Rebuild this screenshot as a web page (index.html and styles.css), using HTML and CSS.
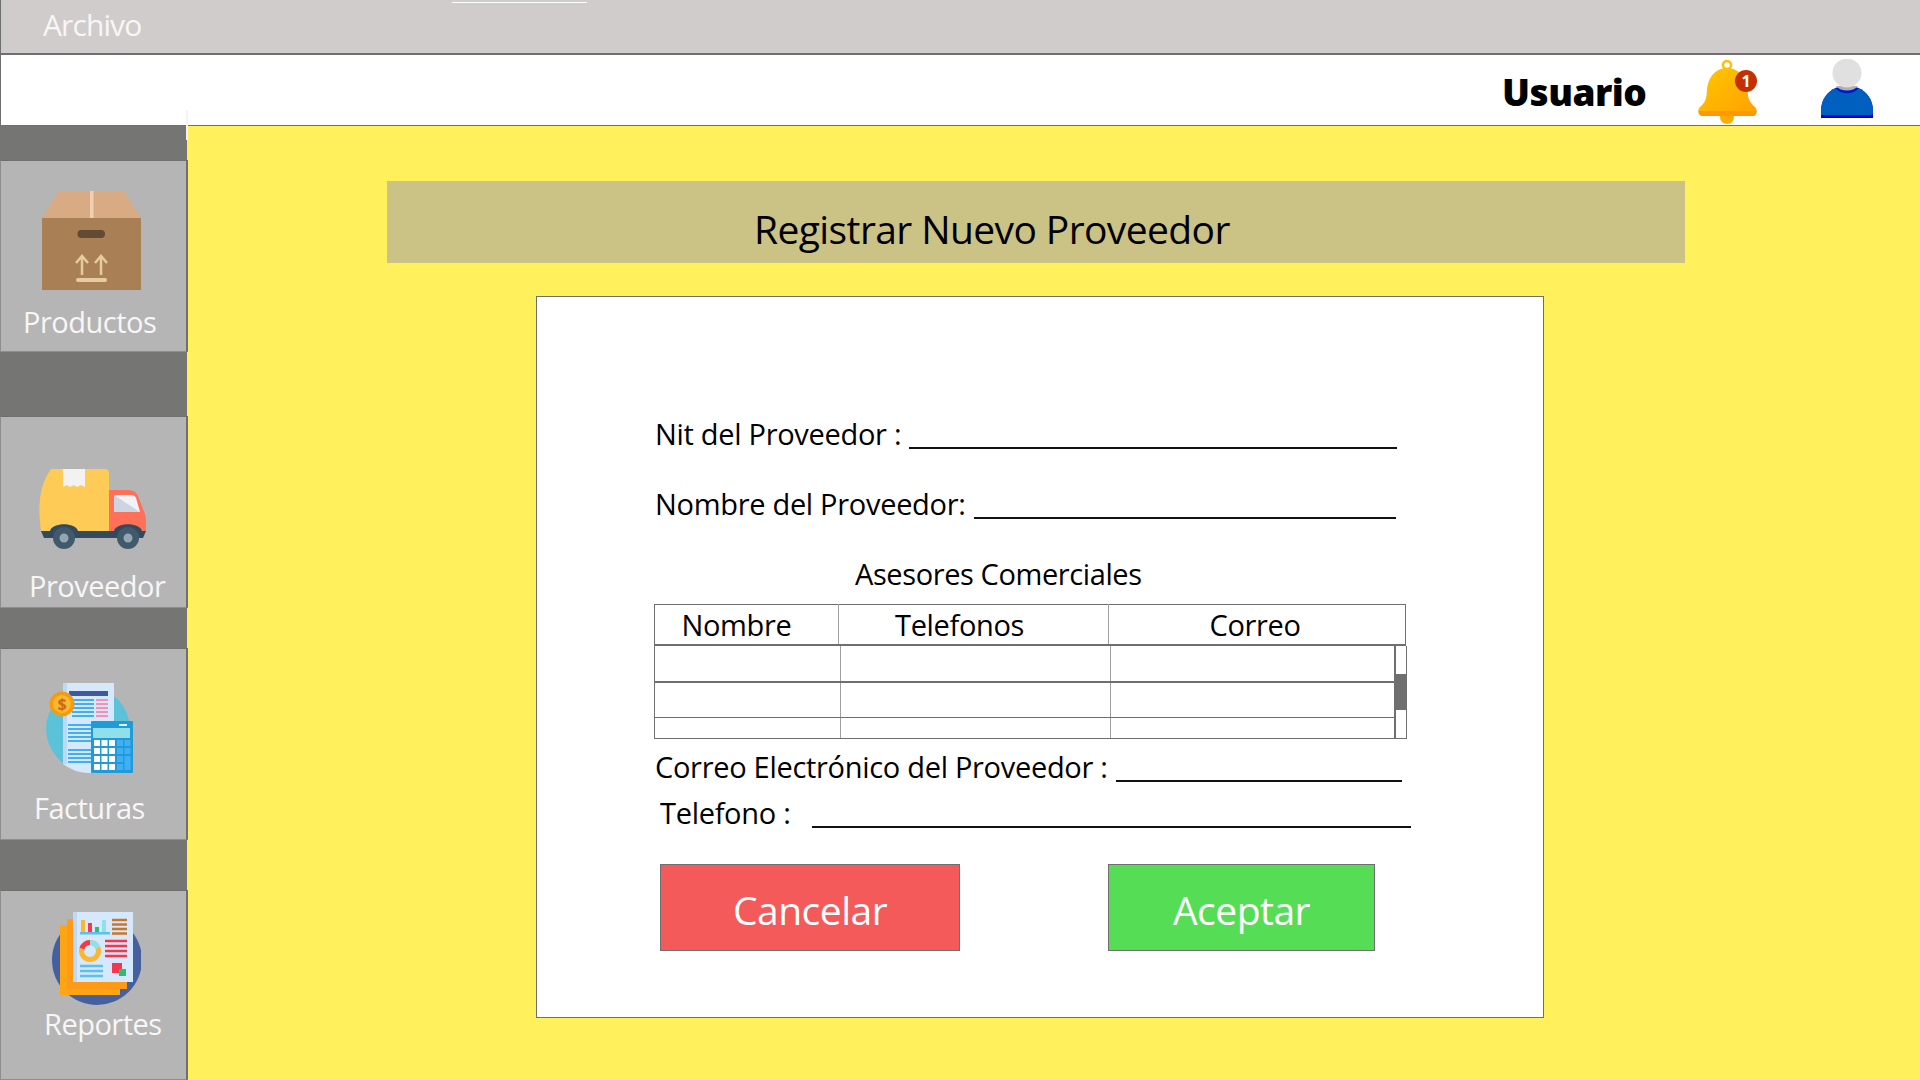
FILE: index.html
```html
<!DOCTYPE html>
<html lang="es">
<head>
  <meta charset="UTF-8" />
  <title>Registrar Nuevo Proveedor</title>
  <link rel="stylesheet" href="styles.css">
</head>
<body>

<div class="menubar"><span class="menu-item">Archivo</span></div>

<div class="topbar">
  <span class="user-name">Usuario</span>
  <svg class="bell" viewBox="0 0 59 64" width="59" height="64">
    <defs>
      <linearGradient id="bellFill" x1="0" y1="0" x2="1" y2="1">
        <stop offset="0" stop-color="#ffc800" />
        <stop offset="1" stop-color="#ffa000" />
      </linearGradient>
    </defs>
    <circle cx="29" cy="5" r="4" fill="#fff" stroke="#ffc000" stroke-width="2.5" />
    <circle cx="29" cy="57" r="7" fill="#ffab00" />
    <path d="M29 8C17 8 10 18 9 30C8.500 38 8 42 2 47C-1 50 0 56 5 56H54C59 56 60 50 57 47C51 42 50 38 49.500 30C49 18 41 8 29 8Z" fill="url(#bellFill)" />
    <path d="M0.500 51H58.500C58 54 57 56 54 56H5C2 56 1 54 0.500 51Z" fill="#ff9800" />
    <circle cx="48" cy="21" r="11" fill="#c43000" />
    <text x="48" y="27" class="badge-text">1</text>
  </svg>
  <svg class="user-icon" viewBox="0 0 52 59" width="52" height="59">
    <path d="M0 59V52C0 40 7 32 15 29H37C45 32 52 40 52 52V59Z" fill="#0000e6" />
    <path d="M0 56V52C0 40 7 32 15 29H37C45 32 52 40 52 52V53C52 55 51 56 49 56Z" fill="#0060c0" />
    <path d="M14 29C20 36 32 36 38 29L34 28H18Z" fill="#0018c8" />
    <path d="M15 27C20 33 32 33 37 27Z" fill="#b0b0b0" />
    <circle cx="26" cy="14" r="14.500" fill="#e0e0e0" />
  </svg>
</div>

<div class="layout">
  <nav class="sidebar">
    <a class="nav-item nav-productos">
      <svg class="nav-icon" viewBox="0 0 99 99" width="99" height="99">
        <path d="M17 0H82L99 27H0Z" fill="#d9ab85" />
        <rect y="27" width="99" height="72" fill="#a98056" />
        <rect x="48" width="3.500" height="27" fill="#f0d0b0" />
        <rect x="35.500" y="39" width="27.500" height="8" rx="4" fill="#634a32" />
        <path d="M34 72L40 65L46 72M40 65V84M53 72L59 65L65 72M59 65V84" fill="none" stroke="#e5cb9f" stroke-width="2.500" />
        <rect x="34" y="87" width="31" height="4" rx="2" fill="#e5cb9f" />
      </svg>
      <span class="nav-label">Productos</span>
    </a>
    <a class="nav-item nav-proveedor">
      <svg class="nav-icon" viewBox="0 0 108 80" width="108" height="80">
        <path d="M12 0H66C68.500 0 70 1.500 70 4V62H2C-1 40 -1 18 12 0Z" fill="#ffcb57" />
        <path d="M24 0H46V18L42 16L38 18L35 16L31 18L28 16L24 18Z" fill="#f2f2f2" />
        <path d="M70 21H90C94 21 97 23 99 27L106 45C107 48 107 52 107 62H70Z" fill="#ff7058" />
        <path d="M75 30C75 27 76 26 78 26H92C95 26 96 27 97 29L101 43H75Z" fill="#f0f3f7" />
        <path d="M75 26L101 43H75Z" fill="#cdd6e0" />
        <path d="M2 62H107L104 69H5Z" fill="#334a5e" />
        <path d="M11 62C13 53 37 53 39 62ZM75 62C77 53 101 53 103 62Z" fill="#334a5e" />
        <circle cx="25" cy="69" r="11" fill="#40596b" />
        <circle cx="25" cy="69" r="4.500" fill="#94a5b3" />
        <circle cx="89" cy="69" r="11" fill="#40596b" />
        <circle cx="89" cy="69" r="4.500" fill="#94a5b3" />
      </svg>
      <span class="nav-label">Proveedor</span>
    </a>
    <a class="nav-item nav-facturas">
      <svg class="nav-icon" viewBox="0 0 87 90" width="87" height="90">
        <circle cx="42" cy="46" r="42" fill="#5cc2d9" />
        <path d="M17 0H68V90H42C33 90 24 86 17 81Z" fill="#d6e8fb" />
        <rect x="17" width="4" height="81" fill="#bcd9f5" />
        <rect x="23" y="8" width="39" height="5" fill="#3f5a9c" />
        <path d="M26 17H48M26 21H48M26 25H48M26 29H48M26 33H48M22 42H46M22 46H46M22 50H46M22 54H46M22 58H46M22 67H46M22 71H46M22 75H46M22 79H46" stroke="#3fb0f5" stroke-width="2" />
        <path d="M50 17H62M50 21H62M50 25H62M50 29H62M50 33H62" stroke="#f78fb3" stroke-width="2" />
        <circle cx="16" cy="21" r="12.500" fill="#f39c12" />
        <circle cx="16" cy="21" r="9" fill="#fdb62f" />
        <text x="16" y="27" class="coin-text">$</text>
        <rect x="45" y="38" width="42" height="52" rx="1" fill="#229ad8" />
        <rect x="47" y="45" width="37" height="10" fill="#8fe0ea" />
        <rect x="73" y="41" width="8" height="2" fill="#e8f4fb" />
        <g fill="#fff">
          <rect x="48" y="57" width="6" height="6" /><rect x="55.500" y="57" width="6" height="6" /><rect x="63" y="57" width="6" height="6" />
          <rect x="48" y="65" width="6" height="6" /><rect x="55.500" y="65" width="6" height="6" /><rect x="63" y="65" width="6" height="6" />
          <rect x="48" y="73" width="6" height="6" /><rect x="55.500" y="73" width="6" height="6" /><rect x="63" y="73" width="6" height="6" />
          <rect x="48" y="81" width="6" height="6" /><rect x="55.500" y="81" width="6" height="6" /><rect x="63" y="81" width="6" height="6" />
        </g>
        <g fill="#3fb0f5">
          <rect x="71" y="57" width="6" height="6" /><rect x="78.500" y="57" width="6" height="6" />
          <rect x="71" y="65" width="6" height="6" /><rect x="78.500" y="65" width="6" height="6" />
          <rect x="71" y="73" width="6" height="6" /><rect x="78.500" y="73" width="6" height="14" />
          <rect x="71" y="81" width="6" height="6" />
        </g>
      </svg>
      <span class="nav-label">Facturas</span>
    </a>
    <a class="nav-item nav-reportes">
      <svg class="nav-icon" viewBox="0 0 89 93" width="89" height="93">
        <circle cx="45" cy="48" r="45" fill="#44609f" />
        <rect x="8" y="13" width="60" height="70" fill="#ffa412" />
        <rect x="15" y="7" width="60" height="70" fill="#ff9a17" />
        <rect x="21" width="60" height="70" fill="#d6e8fb" />
        <rect x="21" width="4" height="70" fill="#bcd9f5" />
        <rect x="28" y="20" width="30" height="2.500" fill="#5cc0ee" />
        <rect x="29" y="8" width="4" height="12" fill="#fdb62f" />
        <rect x="36" y="11" width="4" height="9" fill="#f5364c" />
        <rect x="43" y="15" width="4" height="5" fill="#2fbb70" />
        <rect x="50" y="8" width="4" height="12" fill="#8fe0ea" />
        <path d="M60 8H75M60 12.500H75M60 17H75M60 21.500H75" stroke="#c9752c" stroke-width="2.500" />
        <circle cx="38" cy="39" r="8.500" fill="none" stroke="#fdb62f" stroke-width="5" />
        <path d="M29.900 36.500A8.500 8.500 0 0 1 38 30.500" fill="none" stroke="#f5364c" stroke-width="5" />
        <path d="M38 30.500A8.500 8.500 0 0 1 46 36" fill="none" stroke="#8fe0ea" stroke-width="5" />
        <path d="M53 29H75M53 34H75M53 39H75M53 44H75" stroke="#f5364c" stroke-width="2.500" />
        <path d="M28 54H51M28 59H51M28 64H51" stroke="#5cc0ee" stroke-width="2.500" />
        <rect x="60" y="51" width="10" height="10" fill="#f5364c" />
        <rect x="67" y="57" width="7" height="7" fill="#2fbb70" />
      </svg>
      <span class="nav-label">Reportes</span>
    </a>
  </nav>

  <main class="content">
    <h1 class="banner">Registrar Nuevo Proveedor</h1>

    <section class="card">
      <div class="field field-nit">
        <span>Nit del Proveedor :</span><span class="blank"></span>
      </div>
      <div class="field field-nombre">
        <span>Nombre del Proveedor:</span><span class="blank"></span>
      </div>

      <h2 class="table-title">Asesores Comerciales</h2>
      <div class="advisors">
        <table class="advisors-head">
          <tr><th class="col-name">Nombre</th><th class="col-phone">Telefonos</th><th class="col-mail">Correo</th></tr>
        </table>
        <div class="advisors-body">
          <table class="advisors-rows">
            <tr class="row"><td class="col-name"></td><td class="col-phone"></td><td class="col-mail"></td></tr>
            <tr class="row"><td class="col-name"></td><td class="col-phone"></td><td class="col-mail"></td></tr>
            <tr class="row-cut"><td class="col-name"></td><td class="col-phone"></td><td class="col-mail"></td></tr>
          </table>
          <div class="scrollbar"><div class="scroll-thumb"></div></div>
        </div>
      </div>

      <div class="field field-correo">
        <span>Correo Electrónico del Proveedor :</span><span class="blank"></span>
      </div>
      <div class="field field-telefono">
        <span>Telefono :</span><span class="blank"></span>
      </div>

      <div class="actions">
        <button class="btn btn-cancel">Cancelar</button>
        <button class="btn btn-accept">Aceptar</button>
      </div>
    </section>
  </main>
</div>

</body>
</html>
```

FILE: styles.css
```css
* { box-sizing: border-box; }

html, body {
  margin: 0;
  height: 1080px;
  overflow: hidden;
}
body {
  font-family: "Open Sans", "Noto Sans", sans-serif;
  background: #fff05c;
  color: #000;
  position: relative;
}

/* barra de arriba */
.menubar {
  height: 55px;
  background: #d0cccb;
  border-left: 1px solid #706f6f;
  border-bottom: 2px solid #706f6f;
  padding-left: 42px;
  position: relative;
}
.menubar::after {
  content: "";
  position: absolute;
  left: 451px;
  top: 2px;
  width: 135px;
  height: 1px;
  background: #fff;
}
.menu-item {
  color: #f8f6f6;
  font-size: 30px;
  font-weight: 500;
  line-height: 50px;
  letter-spacing: -0.9px;
}
.topbar {
  height: 71px;
  background: #fff;
  border-left: 1px solid #706f6f;
  border-bottom: 1px solid #706f6f;
  display: flex;
  align-items: flex-start;
  padding-left: 1501px;
}
.user-name {
  font-size: 37px;
  font-weight: 800;
  width: 196px;
  line-height: 50px;
  margin-top: 12px;
  letter-spacing: -0.5px;
}
.bell { margin-top: 5px; }
.user-icon { margin: 4px 0 0 64px; }
.badge-text {
  fill: #fff;
  font-size: 16px;
  font-weight: 700;
  text-anchor: middle;
}
.coin-text {
  fill: #c96a16;
  font-size: 16px;
  font-weight: 700;
  text-anchor: middle;
}

.layout {
  display: flex;
  height: 954px;
}

/* menu lateral */
.sidebar {
  width: 187px;
  height: 954px;
  background: #757573;
  padding-top: 34px;
  flex-shrink: 0;
  position: relative;
}
.sidebar::before {
  content: "";
  position: absolute;
  left: 186px;
  top: -16px;
  width: 2px;
  height: 30px;
  background: #f4f2f4;
}
.nav-item {
  display: block;
  width: 188px;
  height: 192px;
  background: #b5b5b5;
  border-left: 1px solid #8d8d8d;
  border-top: 1px solid #706f6f;
  border-right: 2px solid #706f6f;
  border-bottom: 1px solid #8d8d8d;
  position: relative;
  color: #f8f6f6;
}
.nav-icon { display: block; }
.nav-label {
  display: block;
  font-size: 29px;
  font-weight: 500;
  line-height: 36px;
  letter-spacing: -0.5px;
}
.nav-productos { padding: 30px 0 0 41px; }
.nav-productos .nav-label { margin: 14px 0 0 -19px; }
.nav-proveedor { margin-top: 64px; padding: 52px 0 0 38px; }
.nav-proveedor .nav-label { margin: 19px 0 0 -10px; }
.nav-facturas { margin-top: 40px; padding: 34px 0 0 45px; }
.nav-facturas .nav-label { margin: 17px 0 0 -12px; }
.nav-reportes { margin-top: 50px; height: 190px; padding: 21px 0 0 51px; }
.nav-reportes .nav-label { margin: 1px 0 0 -8px; }

/* contenido */
.content {
  flex: 1;
  padding: 55px 0 0 200px;
}
.banner {
  margin: 0;
  width: 1298px;
  height: 82px;
  background: #cbc286;
  font-size: 39px;
  font-weight: 400;
  line-height: 50px;
  padding: 23px 0 0 367px;
  letter-spacing: -0.6px;
}
.card {
  margin: 33px 0 0 149px;
  width: 1008px;
  height: 722px;
  background: #fff;
  border: 1px solid #706f6f;
  padding: 120px 0 0 118px;
}
.field {
  display: flex;
  font-size: 29px;
  line-height: 34px;
  height: 36px;
  letter-spacing: -0.3px;
}
.blank {
  flex: 1;
  margin-left: 8px;
  border-bottom: 2px solid #111;
  height: 32px;
}
.field-nit { width: 742px; }
.field-nombre { width: 741px; margin-top: 34px; }
.field-correo { width: 747px; margin-top: 11px; }
.field-telefono { width: 751px; margin: 10px 0 0 5px; }
.field-telefono .blank { margin-left: 22px; }

.table-title {
  margin: 34px 0 0 200px;
  font-size: 29px;
  font-weight: 400;
  line-height: 34px;
  height: 36px;
  letter-spacing: -0.4px;
}

/* tabla de asesores */
.advisors {
  width: 753px;
  margin: 11px 0 0 -1px;
}
.advisors table {
  border-collapse: collapse;
  table-layout: fixed;
}
.advisors-head {
  width: 752px;
  border: 1px solid #706f6f;
  border-bottom: 2px solid #706f6f;
}
.advisors-head th {
  height: 40px;
  font-size: 29px;
  font-weight: 400;
  letter-spacing: -0.35px;
  padding: 0;
  border-right: 1px solid #a0a0a0;
}
.advisors-head th.col-name { width: 184px; padding-right: 20px; }
.advisors-head th.col-phone { width: 270px; padding-right: 28px; }
.advisors-head th.col-mail { border-right: 0; padding-right: 4px; }

.advisors-body {
  display: flex;
  height: 93px;
  border-bottom: 1px solid #706f6f;
  border-left: 1px solid #706f6f;
  overflow: hidden;
}
.advisors-rows { width: 739px; }
.advisors-rows td {
  padding: 0;
  border-right: 1px solid #a0a0a0;
}
.advisors-rows td.col-name { width: 185px; }
.advisors-rows td.col-phone { width: 270px; }
.advisors-rows td.col-mail { border-right: 0; }
.row td { height: 36px; border-bottom: 2px solid #706f6f; }
.row + .row td { height: 35px; border-bottom: 1px solid #706f6f; }
.row-cut td { height: 22px; }
.scrollbar {
  width: 13px;
  height: 93px;
  border-left: 2px solid #706f6f;
  border-right: 1px solid #706f6f;
  padding-top: 28px;
}
.scroll-thumb {
  height: 36px;
  background: #706f6f;
}

/* botones */
.actions {
  display: flex;
  margin: 32px 0 0 5px;
}
.btn {
  height: 87px;
  border: 1px solid #706f6f;
  color: #fff;
  font-family: inherit;
  font-size: 39px;
  font-weight: 500;
  letter-spacing: -0.5px;
  padding: 4px 0 0;
}
.btn-cancel { width: 300px; background: #f45a5a; }
.btn-accept { width: 267px; background: #55dd55; margin-left: 148px; }
```
